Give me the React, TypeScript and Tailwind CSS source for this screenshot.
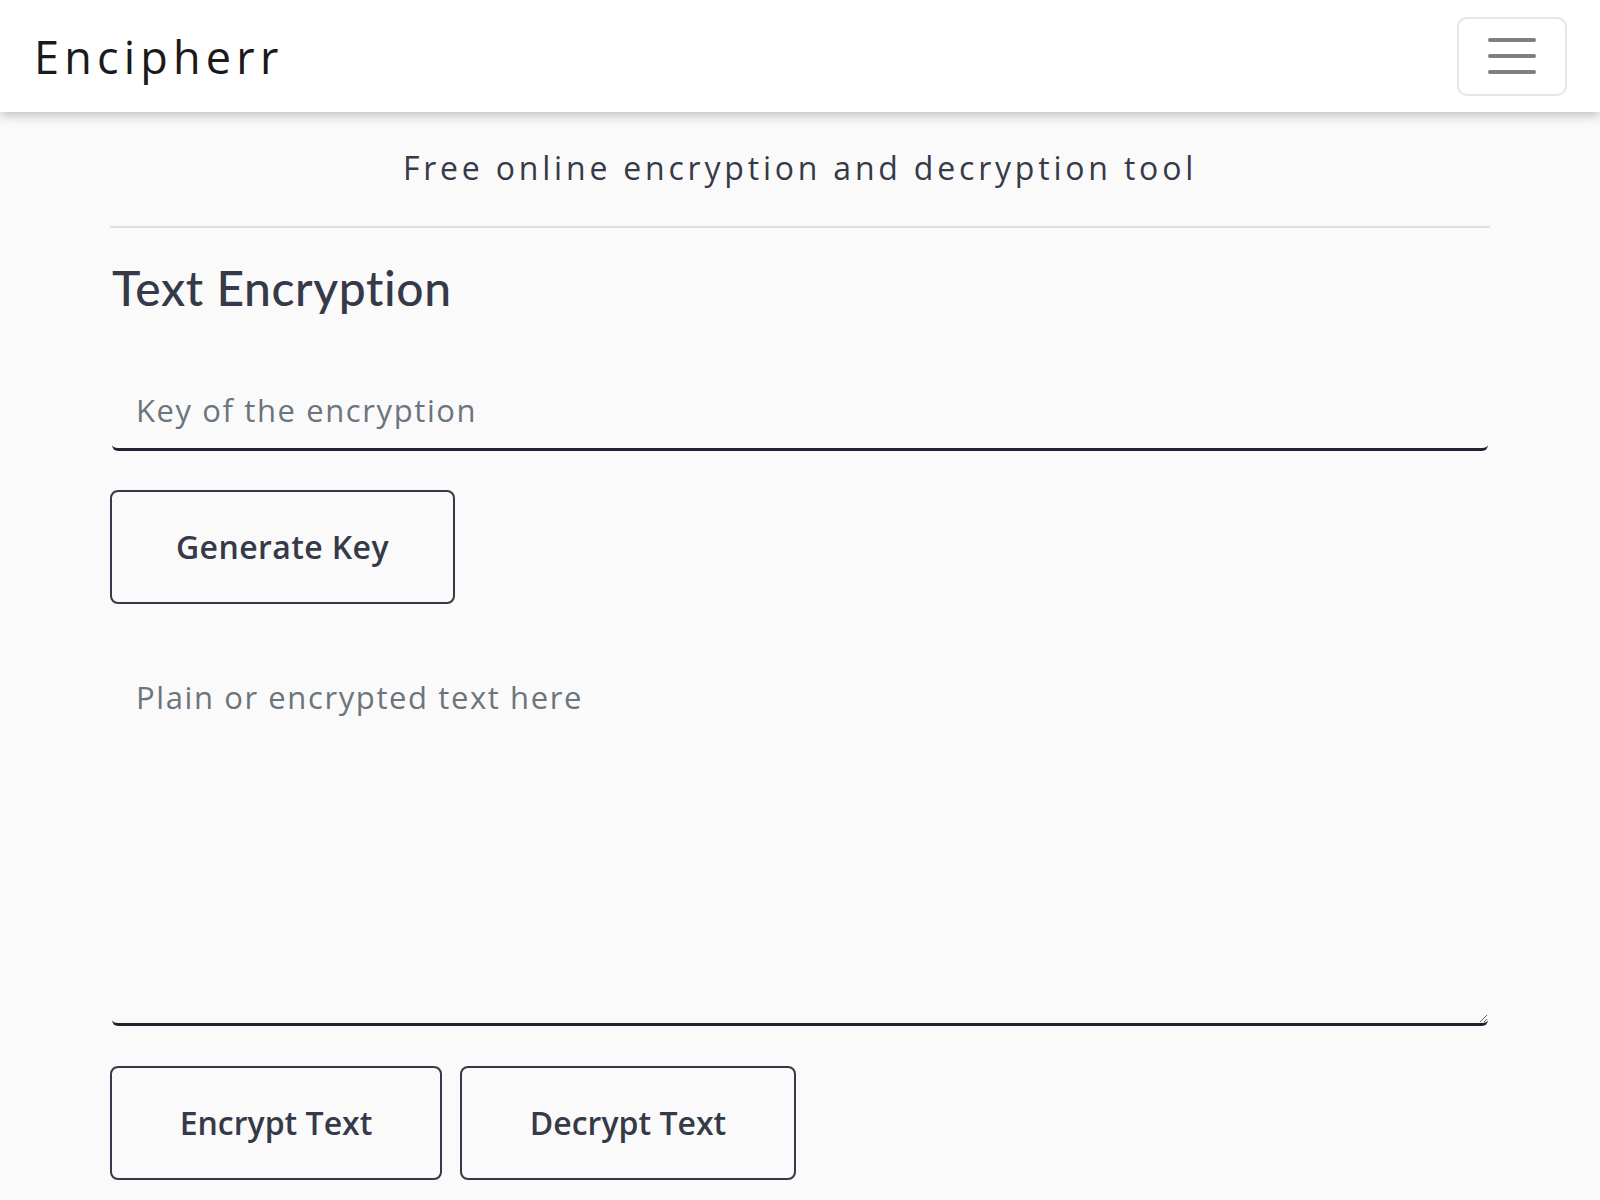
import React, { useState } from "react";

const sans = { fontFamily: '"Open Sans", "Liberation Sans", sans-serif' };
const round = { fontFamily: 'Lato, "Open Sans", sans-serif' };

const App = () => {
  const [key, setKey] = useState("");
  const [text, setText] = useState("");

  return (
    <div className="min-h-[1200px] bg-[#fafafa] text-[#363a48]" style={sans}>
      {/* Navbar */}
      <nav className="relative z-10 h-[112px] bg-white shadow-[0_4px_10px_rgba(0,0,0,0.22)] flex items-center justify-between pl-[34px] pr-[33px]">
        <span className="text-[45px] leading-none tracking-[5.2px] text-[#1a1a1a]">
          Encipherr
        </span>
        <button className="w-[110px] h-[79px] border-2 border-[#e6e6e6] rounded-[10px] flex flex-col items-center justify-center gap-[12px]">
          <span className="block w-[48px] h-[4px] rounded-full bg-[#808080]" />
          <span className="block w-[48px] h-[4px] rounded-full bg-[#808080]" />
          <span className="block w-[48px] h-[4px] rounded-full bg-[#808080]" />
        </button>
      </nav>

      <div className="w-[1380px] mx-auto">
        <p className="mt-[32px] text-center text-[32px] leading-[48px] tracking-[3.8px] font-medium">
          Free online encryption and decryption tool
        </p>
        <hr className="mt-[34px] border-0 h-[2px] bg-[#e0e0e0]" />

        {/* Text Encryption */}
        <h2 className="mt-[36px] ml-[2px] text-[48px] leading-[48px] font-medium tracking-[0.6px]" style={round}>
          Text Encryption
        </h2>

        <input
          value={key}
          onChange={(e) => setKey(e.target.value)}
          placeholder="Key of the encryption"
          className="mt-[60px] block w-[1376px] ml-[2px] h-[79px] px-[24px] bg-transparent border-0 border-b-[3px] border-[#1f2330] rounded-[6px] text-[31px] tracking-[1.6px] outline-none placeholder:text-[#6c757d]"
        />

        <button className="mt-[39px] w-[345px] h-[114px] border-2 border-[#363a48] rounded-[8px] text-[32px] font-semibold tracking-[0.4px]">
          Generate Key
        </button>

        <textarea
          value={text}
          onChange={(e) => setText(e.target.value)}
          placeholder="Plain or encrypted text here"
          className="mt-[46px] block w-[1376px] ml-[2px] h-[376px] p-[24px] bg-transparent border-0 border-b-[3px] border-[#1f2330] rounded-[6px] text-[31px] tracking-[1.6px] leading-[1.5] outline-none placeholder:text-[#6c757d]"
        />

        <div className="mt-[40px] flex gap-[18px]">
          <button className="w-[332px] h-[114px] border-2 border-[#363a48] rounded-[8px] text-[32px] font-semibold">
            Encrypt Text
          </button>
          <button className="w-[336px] h-[114px] border-2 border-[#363a48] rounded-[8px] text-[32px] font-semibold">
            Decrypt Text
          </button>
        </div>
      </div>
    </div>
  );
};

export default App;
